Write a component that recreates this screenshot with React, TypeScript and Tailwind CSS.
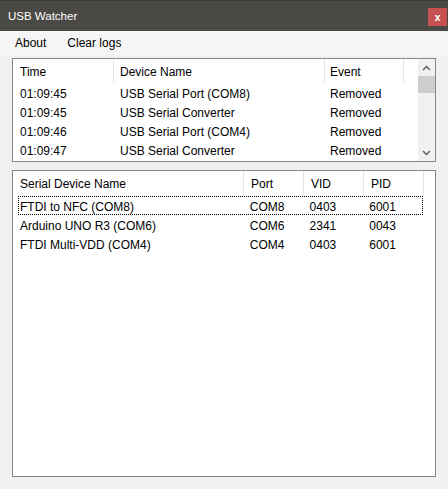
import React from "react";

const logs = [
  { time: "01:09:45", name: "USB Serial Port (COM8)", event: "Removed" },
  { time: "01:09:45", name: "USB Serial Converter", event: "Removed" },
  { time: "01:09:46", name: "USB Serial Port (COM4)", event: "Removed" },
  { time: "01:09:47", name: "USB Serial Converter", event: "Removed" },
];

const devices = [
  { name: "FTDI to NFC (COM8)", port: "COM8", vid: "0403", pid: "6001" },
  { name: "Arduino UNO R3 (COM6)", port: "COM6", vid: "2341", pid: "0043" },
  { name: "FTDI Multi-VDD (COM4)", port: "COM4", vid: "0403", pid: "6001" },
];

const HeaderCell = ({ w, label, pad = "pl-[7px]" }: { w: string; label: string; pad?: string }) => (
  <div className={`${w} flex items-center pt-[1px] ${pad} border-r border-[#e5e5e5] h-full`}>{label}</div>
);

const App = () => {
  return (
    <div
      className="w-[448px] h-[489px] bg-[#f0f0f0] flex flex-col overflow-hidden text-[12px] text-black"
      style={{ fontFamily: '"Liberation Sans", Arial, sans-serif' }}
    >
      {/* title bar */}
      <div className="h-[31px] bg-[#4b4946] border-t border-[#3e3c3a] flex justify-between shrink-0">
        <div className="text-white text-[11.5px] pl-[8px] pt-[7px]">USB Watcher</div>
        <div className="mt-[7px] mr-[1px] w-[19px] h-[18px] bg-[#c75050] flex items-center justify-center text-white text-[11px] font-bold leading-none">
          x
        </div>
      </div>

      {/* menu */}
      <div className="h-[24px] bg-[#f5f5f5] flex items-center gap-[21px] pl-[15px] text-[12px] shrink-0">
        <span>About</span>
        <span>Clear logs</span>
      </div>

      {/* log list */}
      <div className="mt-[3px] mx-[12px] h-[104px] border border-[#828790] bg-white flex shrink-0">
        <div className="flex-1 flex flex-col">
          <div className="h-[24px] flex shrink-0">
            <HeaderCell w="w-[101px]" label="Time" />
            <HeaderCell w="w-[211px]" label="Device Name" pad="pl-[6px]" />
            <HeaderCell w="w-[79px]" label="Event" pad="pl-[5px]" />
          </div>
          {logs.map((l, i) => (
            <div key={i} className="h-[19px] flex items-center pt-[2px]">
              <div className="w-[101px] pl-[7px]">{l.time}</div>
              <div className="w-[211px] pl-[6px]">{l.name}</div>
              <div className="w-[79px] pl-[5px]">{l.event}</div>
            </div>
          ))}
        </div>
        {/* scrollbar */}
        <div className="w-[17px] bg-[#f0f0f0] flex flex-col items-center shrink-0">
          <div className="h-[17px] w-full flex items-center justify-center">
            <svg width="9" height="6" viewBox="0 0 9 6">
              <path d="M1 5 L4.5 1.5 L8 5" stroke="#606060" strokeWidth="1.5" fill="none" />
            </svg>
          </div>
          <div className="h-[17px] w-full bg-[#cdcdcd]" />
          <div className="flex-1" />
          <div className="h-[17px] w-full flex items-center justify-center">
            <svg width="9" height="6" viewBox="0 0 9 6">
              <path d="M1 1 L4.5 4.5 L8 1" stroke="#606060" strokeWidth="1.5" fill="none" />
            </svg>
          </div>
        </div>
      </div>

      {/* device list */}
      <div className="mt-[8px] mx-[12px] h-[307px] border border-[#828790] bg-white flex flex-col shrink-0">
        <div className="h-[25px] flex shrink-0">
          <HeaderCell w="w-[231px]" label="Serial Device Name" />
          <HeaderCell w="w-[60px]" label="Port" />
          <HeaderCell w="w-[60px]" label="VID" />
          <HeaderCell w="w-[60px]" label="PID" />
        </div>
        {devices.map((d, i) => (
          <div
            key={i}
            className={`h-[19px] ml-[5px] w-[405px] flex items-center pt-[2px] ${
              i === 0 ? "border border-dotted border-black" : "border border-transparent"
            }`}
          >
            <div className="w-[225px] pl-[1px]">{d.name}</div>
            <div className="w-[60px] pl-[7px]">{d.port}</div>
            <div className="w-[60px] pl-[7px]">{d.vid}</div>
            <div className="w-[60px] pl-[7px]">{d.pid}</div>
          </div>
        ))}
      </div>
    </div>
  );
};

export default App;
